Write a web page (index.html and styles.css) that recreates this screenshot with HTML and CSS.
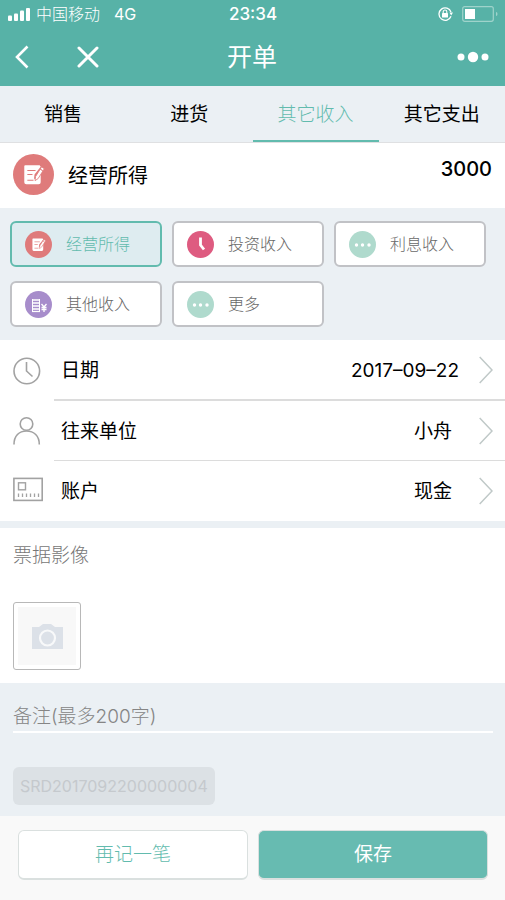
FILE: index.html
```html
<!DOCTYPE html>
<html lang="zh-CN">
<head>
<meta charset="utf-8">
<meta name="viewport" content="width=device-width, initial-scale=1">
<title>开单</title>
<link rel="stylesheet" href="styles.css">
</head>
<body>
<svg class="defs" width="0" height="0" aria-hidden="true">
  <symbol id="note" viewBox="0 0 40 40">
    <circle cx="20" cy="20" r="20" fill="#df7b7b"/>
    <path d="M12 11H26L27 12.500L21 20L20.500 24.500L25 23L27 19.500V27.500Q27 29.500 25 29.500H13Q11 29.500 11 27.500V12Q11 11 12 11Z" fill="#fff"/>
    <path d="M14 16H22M14 20H19M14 25.500H20" stroke="#df7b7b" stroke-width="1" fill="none"/>
    <path d="M28 12.500L30.500 14.500L24.500 24L21.500 26L22 22Z" fill="#fff" stroke="#df7b7b" stroke-width=".8"/>
    <path d="M26.500 14.500L29 16.500" stroke="#df7b7b" stroke-width="1"/>
  </symbol>
  <symbol id="dots" viewBox="0 0 27 27">
    <circle cx="13.500" cy="13.500" r="13.500" fill="#afdacd"/>
    <g fill="#fff"><circle cx="7.500" cy="14" r="1.700"/><circle cx="13.500" cy="14" r="1.700"/><circle cx="20" cy="14" r="1.700"/></g>
  </symbol>
  <symbol id="chevron" viewBox="0 0 14 28">
    <path d="M.7 1L13 14L.7 27" fill="none" stroke="#c0c9c8" stroke-width="1.500"/>
  </symbol>
</svg>

<header class="top">
  <div class="status">
    <div class="carrier">
      <svg width="22" height="13" viewBox="0 0 22 13" fill="#fff" aria-hidden="true">
        <rect x="0" y="7.500" width="4" height="5.500" rx="1"/><rect x="6" y="5.500" width="4" height="7.500" rx="1"/><rect x="12" y="2.500" width="4" height="10.500" rx="1"/><rect x="18" y="0" width="4" height="13" rx="1"/>
      </svg>
      <span>中国移动</span>
      <span class="network">4G</span>
    </div>
    <time class="clock">23:34</time>
    <div class="power">
      <svg width="15" height="14" viewBox="0 0 15 14" aria-hidden="true">
        <path d="M13 5A6.200 6.200 0 1 0 13 9.200" fill="none" stroke="#fff" stroke-width="1.300"/>
        <path d="M11.500 5.500H15L13.200 8.500Z" fill="#fff"/>
        <rect x="4" y="6" width="6" height="4.500" rx=".6" fill="#fff"/>
        <path d="M5.200 6V4.800a1.800 1.800 0 0 1 3.600 0V6" fill="none" stroke="#fff" stroke-width="1.100"/>
      </svg>
      <svg width="36" height="16" viewBox="0 0 36 16" aria-hidden="true">
        <rect x=".7" y=".7" width="30.600" height="14.600" rx="2" fill="none" stroke="#9fd3cb" stroke-width="1.200"/>
        <rect x="3" y="3" width="10" height="10" fill="#fff"/>
        <path d="M34 6q1.500 0 1.500 2t-1.500 2Z" fill="#9fd3cb"/>
      </svg>
    </div>
  </div>
  <nav class="nav">
    <div class="nav-left">
      <button type="button" aria-label="返回"><svg width="14" height="24" viewBox="0 0 14 24"><path d="M12.500 1.500L2 12L12.500 22.500" fill="none" stroke="#fff" stroke-width="2.600"/></svg></button>
      <button type="button" aria-label="关闭"><svg width="22" height="22" viewBox="0 0 22 22"><path d="M2 2L20 20M20 2L2 20" stroke="#fff" stroke-width="3" stroke-linecap="round"/></svg></button>
    </div>
    <h1>开单</h1>
    <button class="more" type="button" aria-label="更多操作"><svg width="32" height="12" viewBox="0 0 32 12" fill="#fff"><circle cx="4" cy="6" r="3.500"/><circle cx="16" cy="6" r="5.200"/><circle cx="28" cy="6" r="3.500"/></svg></button>
  </nav>
</header>

<main>
  <nav class="tabs">
    <a href="#sale">销售</a>
    <a href="#purchase">进货</a>
    <a class="active" href="#income" aria-current="page">其它收入</a>
    <a href="#expense">其它支出</a>
  </nav>

  <section class="summary">
    <svg width="41" height="41" aria-hidden="true"><use href="#note"/></svg>
    <label for="amount">经营所得</label>
    <input id="amount" type="text" inputmode="decimal" value="3000">
  </section>

  <section class="categories">
    <button class="chip selected" type="button" aria-pressed="true"><svg width="27" height="27"><use href="#note"/></svg>经营所得</button>
    <button class="chip" type="button"><svg width="27" height="27" viewBox="0 0 27 27"><circle cx="13.500" cy="13.500" r="13.500" fill="#de5b80"/><path d="M13.500 6.500V14L17 18.500" fill="none" stroke="#fff" stroke-width="2.800"/></svg>投资收入</button>
    <button class="chip" type="button"><svg width="27" height="27"><use href="#dots"/></svg>利息收入</button>
    <button class="chip" type="button"><svg width="27" height="27" viewBox="0 0 27 27"><circle cx="13.500" cy="13.500" r="13.500" fill="#a78dcb"/><path d="M7 9H15M7 12H15M7 15H15M7 18H15" stroke="#fff" stroke-width="1.700"/><path d="M7.500 8V20M14.500 8V20" stroke="#fff" stroke-width="1"/><path d="M7 20.500H15" stroke="#fff" stroke-width="1.200"/><path d="M16.500 13L19 16L21.500 13M19 16V21M16.500 16.500H21.500M16.500 18.500H21.500" fill="none" stroke="#fff" stroke-width="1.300"/></svg>其他收入</button>
    <button class="chip" type="button"><svg width="27" height="27"><use href="#dots"/></svg>更多</button>
  </section>

  <section class="rows">
    <button class="row" type="button">
      <svg class="row-icon" width="30" height="30" viewBox="0 0 30 30" fill="none" stroke="#a2a2a2" stroke-width="1.600"><circle cx="13.800" cy="15" r="12.800"/><path d="M13.500 6V15L19.500 20.500"/></svg>
      <span class="row-body"><span>日期</span><span class="value date">2017–09–22</span><svg class="chevron" width="14" height="28"><use href="#chevron"/></svg></span>
    </button>
    <button class="row" type="button">
      <svg class="row-icon" width="30" height="30" viewBox="0 0 30 30" fill="none" stroke="#a2a2a2" stroke-width="1.600"><circle cx="13.500" cy="8" r="6.300"/><path d="M1 28.500C1 20 6 15 13.500 15S26.300 20 26.300 28.500"/></svg>
      <span class="row-body"><span>往来单位</span><span class="value">小舟</span><svg class="chevron" width="14" height="28"><use href="#chevron"/></svg></span>
    </button>
    <button class="row" type="button">
      <svg class="row-icon" width="30" height="30" viewBox="0 0 30 30" fill="none" stroke="#a2a2a2" stroke-width="1.600"><rect x=".9" y="2.400" width="28.300" height="22"/><rect x="5.500" y="6.800" width="7" height="7" stroke-width="1.400"/><path d="M5.500 17.500V21M9.500 17.500V21M13.500 17.500V21M17.500 17.500V21M21.500 17.500V21M25.500 17.500V21" stroke-width="1.300"/></svg>
      <span class="row-body"><span>账户</span><span class="value">现金</span><svg class="chevron" width="14" height="28"><use href="#chevron"/></svg></span>
    </button>
  </section>

  <section class="receipt">
    <h2>票据影像</h2>
    <button class="photo" type="button" aria-label="添加票据影像">
      <svg width="31" height="25" viewBox="0 0 31 25"><path d="M0 3H7L11 0H19L23 3H31V25H0Z" fill="#dce1e8"/><circle cx="15.500" cy="14" r="7.500" fill="none" stroke="#f8f9fa" stroke-width="2.200"/></svg>
    </button>
  </section>

  <section class="remark">
    <input type="text" maxlength="200" aria-label="备注" placeholder="备注(最多200字)">
    <span class="serial">SRD2017092200000004</span>
  </section>
</main>

<footer class="actions">
  <button class="again" type="button">再记一笔</button>
  <button class="save" type="button">保存</button>
</footer>
</body>
</html>
```
FILE: styles.css
```css
* {
  box-sizing: border-box;
}

body {
  margin: 0;
  min-height: 100vh;
  display: flex;
  flex-direction: column;
  background: #ebf0f4;
  color: #000;
  font: 19px/28px Inter, "Noto Sans CJK SC", sans-serif;
}

button,
input {
  margin: 0;
  padding: 0;
  border: 0;
  background: none;
  color: inherit;
  font: inherit;
}

svg {
  display: block;
  flex: none;
}

.defs {
  position: absolute;
}

main {
  flex: 1;
}

.top {
  background: #57b2a7;
  color: #fff;
}

.status,
.nav {
  display: grid;
  grid-template-columns: 1fr auto 1fr;
  align-items: center;
}

.status {
  height: 28px;
  padding: 0 7px 0 8px;
  font-size: 17px;
}

.carrier {
  display: flex;
  align-items: center;
  gap: 6px;
  font-size: 16px;
  font-weight: 300;
}

.network {
  margin-left: 8px;
  font-weight: 400;
}

.clock {
  font-weight: 500;
}

.power {
  display: flex;
  align-items: center;
  justify-content: flex-end;
  gap: 9px;
}

.nav {
  height: 58px;
  padding: 0 16px 0 15px;
}

.nav-left {
  display: flex;
  align-items: center;
  gap: 48px;
}

.nav h1 {
  margin: 0;
  font-size: 25px;
  font-weight: 400;
}

.more {
  justify-self: end;
}

.tabs {
  display: grid;
  grid-template-columns: repeat(4, 1fr);
  height: 57px;
  border-bottom: 1px solid #dfe0e2;
}

.tabs a {
  display: flex;
  align-items: center;
  justify-content: center;
  padding-top: 4px;
  border-bottom: 2px solid transparent;
  color: #000;
  text-decoration: none;
}

.tabs .active {
  border-color: #62bbae;
  color: #62bbae;
  font-weight: 300;
}

.summary {
  display: flex;
  align-items: center;
  height: 65px;
  padding: 0 13px;
  background: #fff;
  font-size: 20px;
}

.summary svg {
  margin-bottom: 2px;
}

.summary label {
  margin-left: 14px;
}

.summary input {
  flex: 1;
  min-width: 0;
  height: 28px;
  margin-bottom: 14px;
  text-align: right;
  font-weight: 500;
}

.categories {
  display: grid;
  grid-template-columns: repeat(3, 1fr);
  gap: 14px 10px;
  padding: 13px 19px 13px 10px;
}

.chip {
  display: flex;
  align-items: center;
  gap: 14px;
  height: 46px;
  padding-left: 13px;
  border: 2px solid #c1c2c6;
  border-radius: 6px;
  background: #fff;
  color: #686868;
  font-size: 16px;
  font-weight: 300;
}

.chip.selected {
  border-color: #62bbae;
  background: #deecf0;
  color: #62bbae;
}

.rows {
  background: #fff;
}

.row {
  display: flex;
  align-items: center;
  width: 100%;
  padding-left: 13px;
  text-align: left;
}

.row-body {
  flex: 1;
  display: flex;
  align-items: center;
  height: 60px;
  margin-left: 11px;
  padding: 0 12px 0 7px;
  border-bottom: 1px solid #dcdcdc;
}

.row:first-child .row-body {
  height: 61px;
  border-bottom-width: 2px;
}

.row:last-child .row-body {
  border-bottom: 0;
}

.row-body > span {
  padding-top: 2px;
}

.value {
  margin-left: auto;
  padding-right: 27px;
}

.value.date {
  padding-right: 20px;
}

.receipt {
  height: 155px;
  margin-top: 7px;
  padding: 14px 13px;
  background: #fff;
}

.receipt h2 {
  margin: 0 0 32px;
  color: #777;
  font-size: 19px;
  font-weight: 300;
}

.photo {
  display: flex;
  align-items: center;
  justify-content: center;
  width: 68px;
  height: 68px;
  border: 1px solid #b8b8b8;
  border-radius: 3px;
  background: #f8f8f8;
  box-shadow: inset 0 0 0 4px #fff;
}

.remark {
  padding: 16px 12px 11px 13px;
}

.remark input {
  display: block;
  width: 100%;
  height: 34px;
  padding-top: 3px;
  border-bottom: 2px solid #fff;
}

.remark input::placeholder {
  color: #858585;
  font-weight: 300;
  opacity: 1;
}

.serial {
  display: inline-block;
  margin-top: 34px;
  padding: 5px 7px;
  border-radius: 6px;
  background: #dce1e5;
  color: #c5c9cd;
  font-size: 16px;
}

.actions {
  display: grid;
  grid-template-columns: 1fr 1fr;
  gap: 10px;
  height: 84px;
  padding: 14px 17px 20px 18px;
  background: #f9f9f9;
}

.actions button {
  border: 1px solid #dae0df;
  border-bottom-width: 2px;
  border-radius: 6px;
}

.again {
  background: #fff;
  color: #62bbae;
  font-weight: 300;
}

.save {
  background: #67bbb1;
  color: #fff;
}
```
